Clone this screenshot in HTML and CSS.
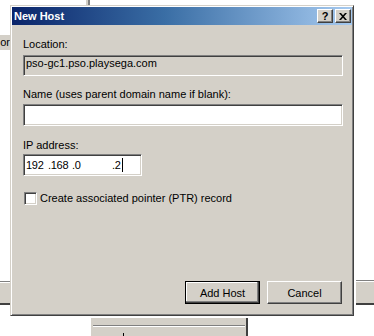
FILE: index.html
```html
<!DOCTYPE html>
<html lang="en">

<head>
    <meta charset="UTF-8">
    <meta name="viewport" content="width=device-width, initial-scale=1.0">
    <title>New Host</title>
    <link rel="stylesheet" href="styles.css">
</head>

<body>
    <div class="desktop">
        <!-- bits of the windows behind the dialog -->
        <div class="behind behind-top"></div>
        <div class="behind behind-or">or</div>
        <div class="behind behind-left"></div>
        <div class="behind behind-right"></div>
        <div class="behind behind-bottom">
            <div class="behind-bottom-inner"></div>
            <div class="behind-mark"></div>
        </div>

        <div class="dialog">
            <div class="titlebar">
                <span class="title">New Host</span>
                <div class="caption-buttons">
                    <div class="caption-btn help">?</div>
                    <div class="caption-btn close">
                        <svg width="8" height="7" viewBox="0 0 8 7">
                            <path d="M0 0h2l2 2.2 2-2.2h2l-3 3.5 3 3.5h-2l-2-2.2-2 2.2h-2l3-3.5z" fill="#000" />
                        </svg>
                    </div>
                </div>
            </div>

            <div class="dialog-body">
                <div class="label label-location">Location:</div>
                <div class="field field-readonly">pso-gc1.pso.playsega.com</div>

                <div class="label label-name">Name (uses parent domain name if blank):</div>
                <div class="field field-name"></div>

                <div class="label label-ip">IP address:</div>
                <div class="field field-ip">
                    <span class="ip-part ip-1">192</span>
                    <span class="ip-part ip-2">.168</span>
                    <span class="ip-part ip-3">.0</span>
                    <span class="ip-part ip-4">.2</span>
                    <span class="caret"></span>
                </div>

                <div class="check-row">
                    <span class="checkbox"></span>
                    <span>Create associated pointer (PTR) record</span>
                </div>

                <div class="button-row">
                    <div class="btn btn-default">Add Host</div>
                    <div class="btn">Cancel</div>
                </div>
            </div>
        </div>
    </div>
</body>

</html>
```

FILE: styles.css
```css
body {
    margin: 0;
    background-color: #fff;
    font-family: "Liberation Sans", Arial, sans-serif;
    font-size: 11px;
    color: #000;
}

.desktop {
    position: relative;
    width: 374px;
    height: 336px;
    overflow: hidden;
}

/* windows peeking out from behind */
.behind {
    position: absolute;
    background-color: #d4d0c8;
}

.behind-top {
    left: 86px;
    top: 0;
    width: 2px;
    height: 5px;
    border-right: 2px solid #808080;
}

.behind-or {
    left: 0;
    top: 35px;
    width: 10px;
    height: 15px;
    line-height: 15px;
    text-align: right;
    overflow: hidden;
    white-space: nowrap;
}

.behind-left {
    left: 0;
    top: 281px;
    width: 10px;
    height: 21px;
    border-top: 1px solid #808080;
    border-bottom: 2px solid #404040;
    box-shadow: inset 0 1px #fff;
}

.behind-right {
    left: 356px;
    top: 280px;
    width: 18px;
    height: 22px;
    border-top: 1px solid #808080;
    border-bottom: 2px solid #404040;
    box-shadow: inset 0 1px #fff;
}

.behind-bottom {
    left: 90px;
    top: 318px;
    width: 155px;
    height: 18px;
    border-left: 1px solid #fff;
    border-right: 2px solid #404040;
}

.behind-bottom-inner {
    margin: 7px 1px 0 2px;
    height: 10px;
    border-top: 1px solid #808080;
    box-shadow: inset 0 1px #fff;
}

.behind-mark {
    position: absolute;
    left: 32px;
    top: 15px;
    width: 1px;
    height: 3px;
    background-color: #000;
}

/* the dialog window */
.dialog {
    position: absolute;
    left: 10px;
    top: 5px;
    width: 340px;
    height: 307px;
    padding: 1px;
    background-color: #d4d0c8;
    border: 1px solid;
    border-color: #d4d0c8 #404040 #404040 #d4d0c8;
    box-shadow: inset 1px 1px #fff, inset -1px -1px #808080;
    display: flex;
    flex-direction: column;
}

.titlebar {
    height: 18px;
    flex: none;
    display: flex;
    align-items: center;
    justify-content: space-between;
    padding: 0 1px 0 2px;
    background: linear-gradient(to right, #0a246a, #3a6ea5 45%, #a6caf0);
}

.title {
    color: #fff;
    font-weight: bold;
    line-height: 13px;
}

.caption-buttons {
    display: flex;
    gap: 2px;
}

.caption-btn {
    width: 14px;
    height: 12px;
    border: 1px solid;
    border-color: #fff #404040 #404040 #fff;
    box-shadow: inset -1px -1px #808080;
    background-color: #d4d0c8;
    display: flex;
    align-items: center;
    justify-content: center;
    font-weight: bold;
    font-size: 11px;
    line-height: 12px;
}

.caption-btn svg {
    display: block;
    margin-left: -1px;
}

.dialog-body {
    flex: 1;
    display: flex;
    flex-direction: column;
    padding: 13px 9px 10px 11px;
}

.label {
    line-height: 13px;
    white-space: nowrap;
}

.label-name {
    margin-top: 12px;
}

.label-ip {
    margin-top: 13px;
}

.field {
    box-sizing: border-box;
    height: 22px;
    border: 1px solid;
    border-color: #808080 #fff #fff #808080;
    box-shadow: inset 1px 1px #404040, inset -1px -1px #d4d0c8;
    background-color: #fff;
    margin-top: 3px;
}

.field-readonly {
    height: 21px;
    margin-top: 4px;
    background-color: #d4d0c8;
    padding: 1px 2px;
    line-height: 12px;
}

.field-ip {
    width: 119px;
    margin-top: 2px;
    display: flex;
    align-items: center;
    padding-left: 2px;
    line-height: 13px;
    letter-spacing: -0.3px;
}

.ip-part {
    flex: none;
    white-space: pre;
}

.ip-1 {
    width: 22px;
}

.ip-2 {
    width: 24px;
}

.ip-3 {
    width: 40px;
}

.caret {
    flex: none;
    width: 1px;
    height: 14px;
    margin-left: 1px;
    background-color: #000;
}

.check-row {
    margin-top: 16px;
    display: flex;
    align-items: center;
    line-height: 13px;
}

.checkbox {
    box-sizing: border-box;
    width: 13px;
    height: 13px;
    margin: 0 3px 0 1px;
    border: 1px solid;
    border-color: #808080 #fff #fff #808080;
    box-shadow: inset 1px 1px #404040, inset -1px -1px #d4d0c8;
    background-color: #fff;
}

.button-row {
    margin-top: auto;
    display: flex;
    justify-content: flex-end;
    gap: 7px;
    padding-right: 1px;
}

.btn {
    box-sizing: border-box;
    width: 75px;
    height: 23px;
    display: flex;
    align-items: center;
    justify-content: center;
    background-color: #d4d0c8;
    border: 1px solid;
    border-color: #fff #404040 #404040 #fff;
    box-shadow: inset -1px -1px #808080;
}

.btn-default {
    border-color: #000;
    box-shadow: inset -1px -1px #404040, inset -2px -2px #808080, inset 1px 1px #fff;
}
```
